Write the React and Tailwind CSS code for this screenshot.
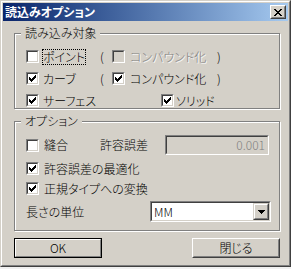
import React from "react";

function Check() {
  return (
    <svg width="7" height="7" viewBox="0 0 7 7" shapeRendering="crispEdges" fill="#000">
      <rect x="6" y="0" width="1" height="1" />
      <rect x="5" y="1" width="2" height="1" />
      <rect x="0" y="2" width="1" height="1" />
      <rect x="4" y="2" width="3" height="1" />
      <rect x="0" y="3" width="2" height="1" />
      <rect x="3" y="3" width="3" height="1" />
      <rect x="0" y="4" width="5" height="1" />
      <rect x="1" y="5" width="3" height="1" />
      <rect x="2" y="6" width="1" height="1" />
    </svg>
  );
}

function Checkbox({ checked, disabled }) {
  return (
    <div className="w-[13px] h-[13px] shrink-0 border border-t-[#808080] border-l-[#808080] border-b-white border-r-white">
      <div
        className={`w-full h-full border border-t-[#404040] border-l-[#404040] border-b-[#d4d0c8] border-r-[#d4d0c8] flex items-center justify-center ${
          disabled ? "bg-[#d4d0c8]" : "bg-white"
        }`}
      >
        {checked && <Check />}
      </div>
    </div>
  );
}

function Group({ label, className, children }) {
  return (
    <div
      className={`relative border border-[#808080] shadow-[inset_1px_1px_0_#fff,1px_1px_0_#fff] ${className}`}
    >
      <span className="absolute left-[6px] top-[-8px] px-[4px] bg-[#d4d0c8] leading-[14px]">
        {label}
      </span>
      {children}
    </div>
  );
}

export default function App() {
  return (
    <div className="w-[291px] h-[269px] bg-[#f0f0f0] font-['Noto_Sans_CJK_JP',sans-serif] font-light text-[12px] leading-[14px] text-black [font-feature-settings:'palt']">
      <div className="w-[291px] h-[267px] border border-t-[#d4d0c8] border-l-[#d4d0c8] border-b-[#404040] border-r-[#404040]">
        <div className="h-full border border-t-white border-l-white border-b-[#808080] border-r-[#808080] p-[1px] bg-[#d4d0c8] flex flex-col">
          {/* Title bar */}
          <div className="flex items-center justify-between h-[18px] bg-linear-to-r from-[#0a246a] to-[#a6caf0]">
            <span className="pl-[2px] text-white font-bold text-[12px] leading-[14px]">
              読込みオプション
            </span>
            <div className="mr-[2px] w-[16px] h-[14px] border border-t-white border-l-white border-b-[#404040] border-r-[#404040]">
              <div className="w-full h-full border border-t-[#d4d0c8] border-l-[#d4d0c8] border-b-[#808080] border-r-[#808080] bg-[#d4d0c8] flex items-center justify-center">
                <svg width="8" height="7" viewBox="0 0 8 7" shapeRendering="crispEdges" fill="#000">
                  <rect x="0" y="0" width="2" height="1" />
                  <rect x="6" y="0" width="2" height="1" />
                  <rect x="1" y="1" width="2" height="1" />
                  <rect x="5" y="1" width="2" height="1" />
                  <rect x="2" y="2" width="4" height="1" />
                  <rect x="3" y="3" width="2" height="1" />
                  <rect x="2" y="4" width="4" height="1" />
                  <rect x="1" y="5" width="2" height="1" />
                  <rect x="5" y="5" width="2" height="1" />
                  <rect x="0" y="6" width="2" height="1" />
                  <rect x="6" y="6" width="2" height="1" />
                </svg>
              </div>
            </div>
          </div>

          {/* Body */}
          <div className="pl-[11px] pt-[12px] flex flex-col">
            <Group label="読み込み対象" className="w-[266px] h-[76px] pt-[16px] flex flex-col gap-[9px]">
              <div className="flex items-center h-[13px] pl-[11px]">
                <div className="flex items-center w-[74px]">
                  <Checkbox />
                  <span className="ml-[3px] border border-dotted border-black leading-[14px]">
                    ポイント
                  </span>
                </div>
                <span className="w-[12px]">(</span>
                <Checkbox disabled />
                <span className="ml-[5px] w-[87px] text-[#808080] [text-shadow:1px_1px_0_#fff]">
                  コンパウンド化
                </span>
                <span>)</span>
              </div>
              <div className="flex items-center h-[13px] pl-[11px]">
                <div className="flex items-center w-[74px]">
                  <Checkbox checked />
                  <span className="ml-[4px]">カーブ</span>
                </div>
                <span className="w-[12px]">(</span>
                <Checkbox checked />
                <span className="ml-[5px] w-[87px]">コンパウンド化</span>
                <span>)</span>
              </div>
              <div className="flex items-center h-[13px] pl-[11px]">
                <div className="flex items-center w-[135px]">
                  <Checkbox checked />
                  <span className="ml-[4px]">サーフェス</span>
                </div>
                <Checkbox checked />
                <span className="ml-[2px]">ソリッド</span>
              </div>
            </Group>

            <Group label="オプション" className="mt-[12px] w-[266px] h-[110px] pt-[13px] flex flex-col">
              <div className="flex items-center h-[20px] pl-[11px]">
                <div className="flex items-center w-[74px]">
                  <Checkbox />
                  <span className="ml-[5px]">縫合</span>
                </div>
                <span className="w-[65px]">許容誤差</span>
                <div className="w-[104px] h-[20px] border border-t-[#808080] border-l-[#808080] border-b-white border-r-white">
                  <div className="w-full h-full border border-t-[#404040] border-l-[#404040] border-b-[#d4d0c8] border-r-[#d4d0c8] bg-[#d4d0c8] flex items-center justify-end pr-[2px] text-[#808080]">
                    0.001
                  </div>
                </div>
              </div>
              <div className="flex items-center h-[13px] pl-[11px] mt-[7px]">
                <Checkbox checked />
                <span className="ml-[5px]">許容誤差の最適化</span>
              </div>
              <div className="flex items-center h-[13px] pl-[11px] mt-[7px]">
                <Checkbox checked />
                <span className="ml-[5px]">正規タイプへの変換</span>
              </div>
              <div className="flex items-center h-[21px] pl-[11px] mt-[6px]">
                <span className="w-[124px]">長さの単位</span>
                <div className="w-[121px] h-[21px] border border-t-[#808080] border-l-[#808080] border-b-white border-r-white">
                  <div className="w-full h-full border border-t-[#404040] border-l-[#404040] border-b-[#d4d0c8] border-r-[#d4d0c8] bg-white flex items-center justify-between">
                    <span className="pl-[2px]">MM</span>
                    <div className="w-[16px] h-[17px] border border-t-[#d4d0c8] border-l-[#d4d0c8] border-b-[#404040] border-r-[#404040]">
                      <div className="w-full h-full border border-t-white border-l-white border-b-[#808080] border-r-[#808080] bg-[#d4d0c8] flex items-center justify-center">
                        <svg width="7" height="4" viewBox="0 0 7 4" shapeRendering="crispEdges" fill="#000">
                          <rect x="0" y="0" width="7" height="1" />
                          <rect x="1" y="1" width="5" height="1" />
                          <rect x="2" y="2" width="3" height="1" />
                          <rect x="3" y="3" width="1" height="1" />
                        </svg>
                      </div>
                    </div>
                  </div>
                </div>
              </div>
            </Group>

            <div className="mt-[7px] w-[266px] flex justify-between">
              <div className="w-[88px] h-[20px] border border-black">
                <div className="w-full h-full border border-t-white border-l-white border-b-[#808080] border-r-[#808080] flex items-center justify-center">
                  OK
                </div>
              </div>
              <div className="w-[88px] h-[20px] border border-t-white border-l-white border-b-[#404040] border-r-[#404040]">
                <div className="w-full h-full border border-t-[#d4d0c8] border-l-[#d4d0c8] border-b-[#808080] border-r-[#808080] flex items-center justify-center">
                  閉じる
                </div>
              </div>
            </div>
          </div>
        </div>
      </div>
    </div>
  );
}
